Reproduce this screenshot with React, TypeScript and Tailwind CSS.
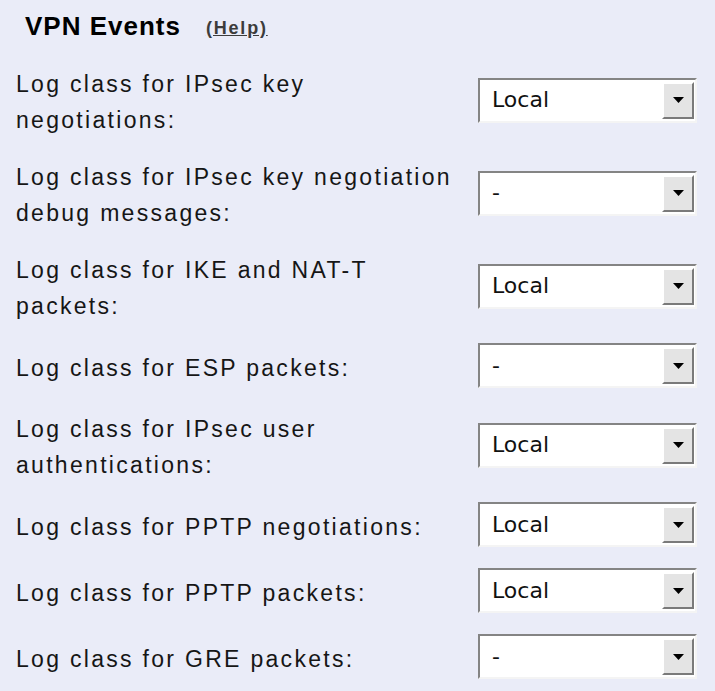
import React from "react";

type Row = { lines: string[]; value: string };

const rows: Row[] = [
  { lines: ["Log class for IPsec key", "negotiations:"], value: "Local" },
  { lines: ["Log class for IPsec key negotiation", "debug messages:"], value: "-" },
  { lines: ["Log class for IKE and NAT-T", "packets:"], value: "Local" },
  { lines: ["Log class for ESP packets:"], value: "-" },
  { lines: ["Log class for IPsec user", "authentications:"], value: "Local" },
  { lines: ["Log class for PPTP negotiations:"], value: "Local" },
  { lines: ["Log class for PPTP packets:"], value: "Local" },
  { lines: ["Log class for GRE packets:"], value: "-" },
];

function FakeSelect({ value }: { value: string }) {
  return (
    <div className="flex h-[45px] w-[219px] items-center border-2 border-t-[#848484] border-l-[#848484] border-r-[#f4f4f4] border-b-[#f4f4f4] bg-white">
      <span className="flex-1 pl-[12px] text-[22px] leading-none text-[#111] [font-family:'DejaVu_Sans',sans-serif]">
        {value}
      </span>
      <div className="mr-[1px] flex h-[37px] w-[32px] items-center justify-center border-2 border-t-white border-l-white border-r-[#7a7a7a] border-b-[#7a7a7a] bg-[#e4e4e4]">
        <svg width="11" height="6" viewBox="0 0 11 6">
          <polygon points="0,0 11,0 5.5,6" fill="#000" />
        </svg>
      </div>
    </div>
  );
}

export default function App() {
  return (
    <div className="min-h-screen w-full bg-[#eaecf8] pl-[16px] pr-[18px] text-[#161616] [font-family:'Liberation_Sans',Arial,sans-serif]">
      <div className="flex h-[53.5px] items-center pl-[9px]">
        <span className="text-[26px] font-bold tracking-[1px] text-black">VPN Events</span>
        <a
          href="#"
          className="ml-[25px] mt-[3px] text-[18px] font-bold tracking-[1.8px] text-[#3c3c3c] underline"
        >
          (Help)
        </a>
      </div>
      {rows.map((r, i) => (
        <div key={i} className="flex items-center justify-between py-[10.5px]">
          <div className="translate-y-[2px] text-[23px] leading-[36px] tracking-[2.3px]">
            {r.lines.map((l, j) => (
              <div key={j} className="whitespace-nowrap">
                {l}
              </div>
            ))}
          </div>
          <FakeSelect value={r.value} />
        </div>
      ))}
    </div>
  );
}
